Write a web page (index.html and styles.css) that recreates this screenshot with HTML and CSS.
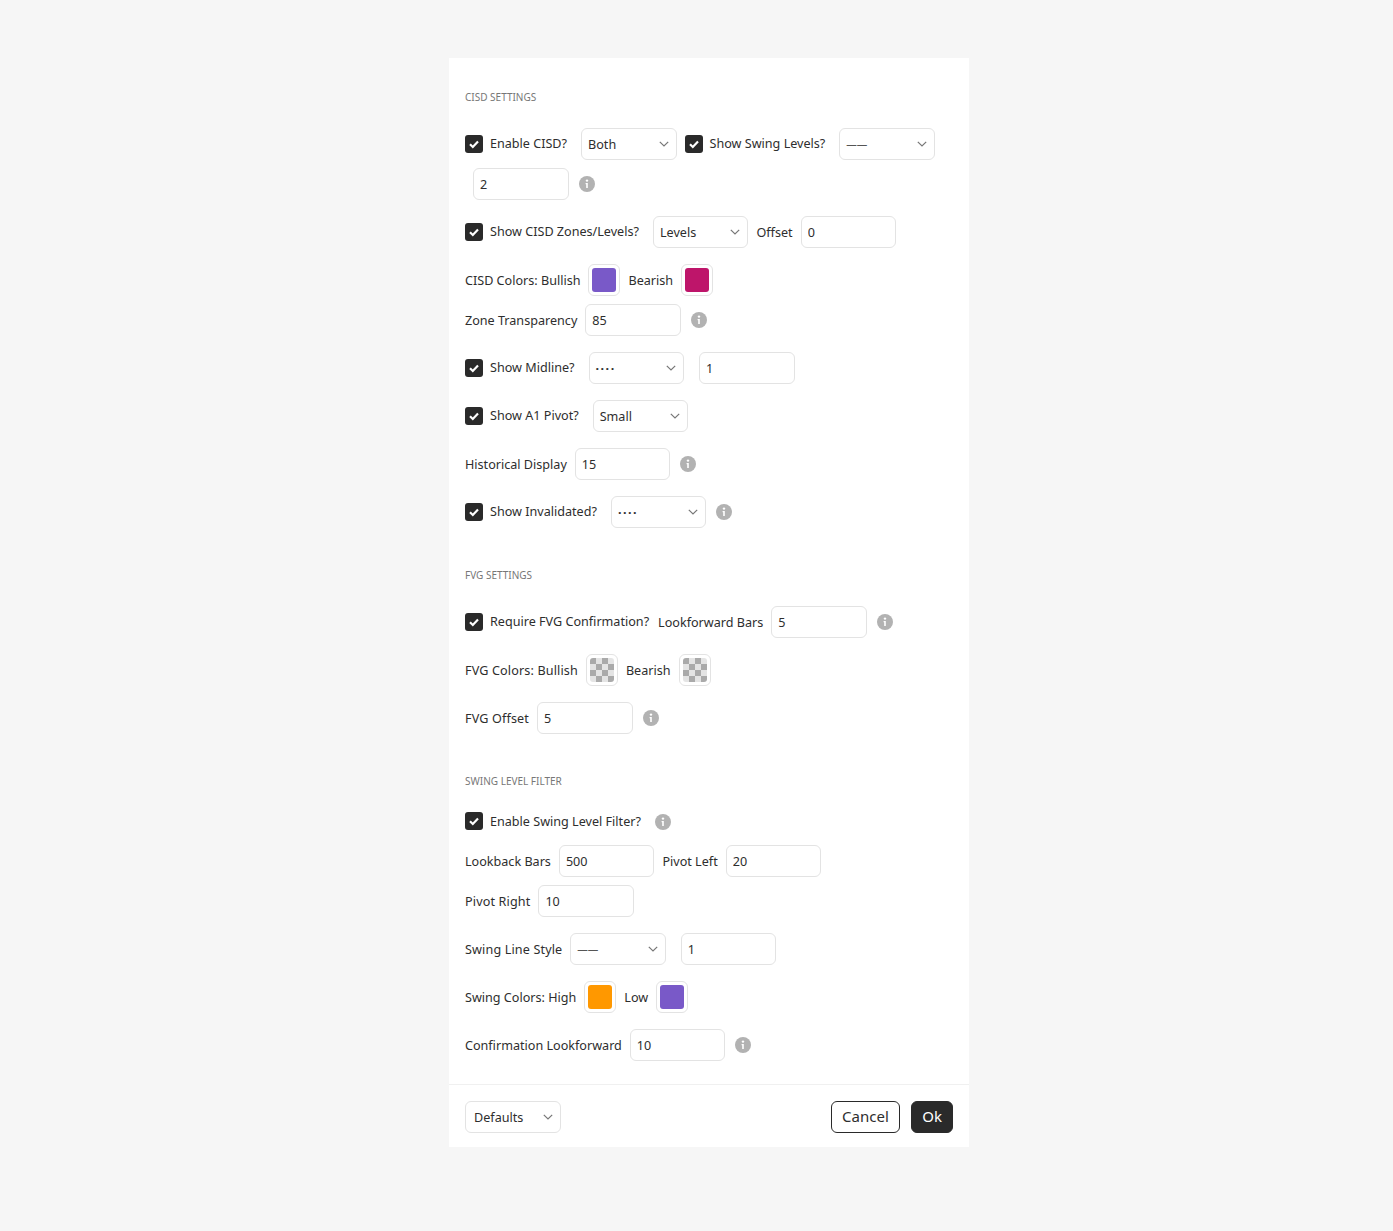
FILE: index.html
```html
<!DOCTYPE html>
<html lang="en">
<head>
    <meta charset="UTF-8">
    <title>Indicator Settings</title>
    <link rel="stylesheet" href="styles.css">
</head>
<body>
    <svg class="defs" width="0" height="0">
        <symbol id="tick" viewBox="0 0 18 18"><path d="M5 9.3l2.8 2.7L13 6.6" fill="none" stroke="#fff" stroke-width="2.2"/></symbol>
        <symbol id="chev" viewBox="0 0 10 6"><path d="M.8.8L5 5l4.2-4.2" fill="none" stroke="#777" stroke-width="1.2"/></symbol>
        <symbol id="info" viewBox="0 0 16 16"><circle cx="8" cy="8" r="8" fill="#b2b2b2"/><circle cx="8" cy="4.6" r="1.2" fill="#fff"/><path d="M6.6 7h2.2v5H7.2V8.3h-.6z" fill="#fff"/></symbol>
    </svg>

    <div class="panel">
        <div class="content">
            <div class="section-title first">CISD SETTINGS</div>

            <div class="group">
                <div class="line">
                    <label class="check"><span class="box"><svg><use href="#tick"/></svg></span>Enable CISD?</label>
                    <div class="select"><span>Both</span><svg><use href="#chev"/></svg></div>
                    <label class="check"><span class="box"><svg><use href="#tick"/></svg></span>Show Swing Levels?</label>
                    <div class="select"><span class="solid">——</span><svg><use href="#chev"/></svg></div>
                </div>
                <div class="line indent">
                    <input class="field" value="2">
                    <svg class="info"><use href="#info"/></svg>
                </div>
            </div>

            <div class="group">
                <div class="line">
                    <label class="check"><span class="box"><svg><use href="#tick"/></svg></span>Show CISD Zones/Levels?</label>
                    <div class="select"><span>Levels</span><svg><use href="#chev"/></svg></div>
                    <span class="text">Offset</span>
                    <input class="field" value="0">
                </div>
            </div>

            <div class="group">
                <div class="line">
                    <span class="text">CISD Colors: Bullish</span>
                    <span class="swatch"><i class="purple"></i></span>
                    <span class="text">Bearish</span>
                    <span class="swatch"><i class="magenta"></i></span>
                </div>
                <div class="line">
                    <span class="text">Zone Transparency</span>
                    <input class="field" value="85">
                    <svg class="info"><use href="#info"/></svg>
                </div>
            </div>

            <div class="group">
                <div class="line">
                    <label class="check"><span class="box"><svg><use href="#tick"/></svg></span>Show Midline?</label>
                    <div class="select"><span class="dotted">····</span><svg><use href="#chev"/></svg></div>
                    <input class="field wide-gap" value="1">
                </div>
            </div>

            <div class="group">
                <div class="line">
                    <label class="check"><span class="box"><svg><use href="#tick"/></svg></span>Show A1 Pivot?</label>
                    <div class="select"><span>Small</span><svg><use href="#chev"/></svg></div>
                </div>
            </div>

            <div class="group">
                <div class="line">
                    <span class="text">Historical Display</span>
                    <input class="field" value="15">
                    <svg class="info"><use href="#info"/></svg>
                </div>
            </div>

            <div class="group">
                <div class="line">
                    <label class="check"><span class="box"><svg><use href="#tick"/></svg></span>Show Invalidated?</label>
                    <div class="select"><span class="dotted">····</span><svg><use href="#chev"/></svg></div>
                    <svg class="info"><use href="#info"/></svg>
                </div>
            </div>

            <div class="section-title">FVG SETTINGS</div>

            <div class="group">
                <div class="line">
                    <label class="check"><span class="box"><svg><use href="#tick"/></svg></span>Require FVG Confirmation?</label>
                    <span class="text">Lookforward Bars</span>
                    <input class="field" value="5">
                    <svg class="info"><use href="#info"/></svg>
                </div>
            </div>

            <div class="group">
                <div class="line">
                    <span class="text spaced">FVG Colors: Bullish</span>
                    <span class="swatch"><i class="checker"></i></span>
                    <span class="text">Bearish</span>
                    <span class="swatch"><i class="checker"></i></span>
                </div>
            </div>

            <div class="group">
                <div class="line">
                    <span class="text spaced">FVG Offset</span>
                    <input class="field" value="5">
                    <svg class="info"><use href="#info"/></svg>
                </div>
            </div>

            <div class="section-title swing-title">SWING LEVEL FILTER</div>

            <div class="group tight">
                <div class="line">
                    <label class="check"><span class="box"><svg><use href="#tick"/></svg></span>Enable Swing Level Filter?</label>
                    <svg class="info"><use href="#info"/></svg>
                </div>
            </div>

            <div class="group">
                <div class="line">
                    <span class="text">Lookback Bars</span>
                    <input class="field" value="500">
                    <span class="text">Pivot Left</span>
                    <input class="field" value="20">
                </div>
                <div class="line">
                    <span class="text spaced">Pivot Right</span>
                    <input class="field" value="10">
                </div>
            </div>

            <div class="group">
                <div class="line">
                    <span class="text spaced">Swing Line Style</span>
                    <div class="select"><span class="solid">——</span><svg><use href="#chev"/></svg></div>
                    <input class="field wide-gap" value="1">
                </div>
            </div>

            <div class="group">
                <div class="line">
                    <span class="text">Swing Colors: High</span>
                    <span class="swatch"><i class="orange"></i></span>
                    <span class="text">Low</span>
                    <span class="swatch"><i class="purple"></i></span>
                </div>
            </div>

            <div class="group">
                <div class="line">
                    <span class="text">Confirmation Lookforward</span>
                    <input class="field" value="10">
                    <svg class="info"><use href="#info"/></svg>
                </div>
            </div>
        </div>

        <div class="footer">
            <div class="select defaults"><span>Defaults</span><svg><use href="#chev"/></svg></div>
            <div class="actions">
                <button class="btn">Cancel</button>
                <button class="btn btn-dark">Ok</button>
            </div>
        </div>
    </div>
</body>
</html>
```

FILE: styles.css
```css
* {
    box-sizing: border-box;
}
body {
    margin: 0;
    height: 1231px;
    padding-top: 58px;
    background: #f6f6f6;
    font-family: "Noto Sans", sans-serif;
    font-size: 12.6px;
    color: #2e2e2e;
}
.defs {
    position: absolute;
}
.panel {
    width: 520px;
    margin-left: 449px;
    background: #fff;
}
.content {
    padding: 31px 16px 23px;
}
.section-title {
    height: 16px;
    margin: 39px 0 23px;
    font-size: 10px;
    line-height: 16px;
    color: #777;
}
.section-title.first {
    margin-top: 0;
}
.swing-title {
    margin-bottom: 24px;
}
.group {
    display: flex;
    flex-direction: column;
    gap: 8px;
    margin-bottom: 16px;
}
.group.tight {
    margin-bottom: 15px;
}
.group:last-child {
    margin-bottom: 0;
}
.line {
    display: flex;
    align-items: center;
    gap: 8px;
}
.indent {
    padding-left: 8px;
}
.text {
    white-space: nowrap;
}
.spaced {
    letter-spacing: 0.14px;
}
.check {
    display: flex;
    align-items: center;
    gap: 7px;
    height: 18px;
    margin-top: -1px;
    margin-right: 6px;
    white-space: nowrap;
}
.check + .text {
    margin-left: -5px;
}
.check + .info {
    margin-left: 0;
}
.box {
    width: 18px;
    height: 18px;
    border-radius: 3px;
    background: #2a2a2a;
}
.box svg {
    display: block;
    width: 18px;
    height: 18px;
}
.select,
.field {
    width: 95.5px;
    height: 32px;
    border: 1px solid #e3e3e3;
    border-radius: 6px;
    background: #fff;
}
.select {
    display: flex;
    flex: none;
    align-items: center;
    justify-content: space-between;
    padding: 0 7px 0 6px;
}
.select svg {
    width: 10px;
    height: 6px;
}
.solid {
    font-size: 10.5px;
    color: #555;
}
.dotted {
    letter-spacing: 1.5px;
    font-weight: 700;
}
.defaults {
    width: 96px;
    padding-left: 8px;
}
.field {
    flex: none;
    padding: 0 6px;
    font: inherit;
    color: inherit;
    outline: none;
}
.wide-gap {
    margin-left: 7px;
}
.info {
    flex: none;
    width: 16px;
    height: 16px;
    margin-left: 2px;
}
.swatch {
    display: flex;
    flex: none;
    align-items: center;
    justify-content: center;
    width: 32px;
    height: 32px;
    border: 1px solid #e3e3e3;
    border-radius: 6px;
}
.swatch i {
    display: block;
    width: 24px;
    height: 24px;
    border-radius: 3px;
}
.purple { background: #7959c8; }
.magenta { background: #be156a; }
.orange { background: #ff9800; }
.checker {
    background: repeating-conic-gradient(#aaa 0 25%, #e4e4e4 0 50%) 6px 0 / 12px 12px;
}
.footer {
    display: flex;
    align-items: flex-start;
    justify-content: space-between;
    padding: 16px 16px 14px;
    border-top: 1px solid #f0f0f0;
}
.actions {
    display: flex;
    gap: 11px;
}
.btn {
    height: 32px;
    padding: 0 10.5px 2px;
    border: 1px solid #2a2a2a;
    border-radius: 6px;
    background: #fff;
    font: inherit;
    font-size: 15px;
    color: #2e2e2e;
}
.btn-dark {
    padding: 0 10px 2px;
    background: #2a2a2a;
    color: #fff;
}
```
